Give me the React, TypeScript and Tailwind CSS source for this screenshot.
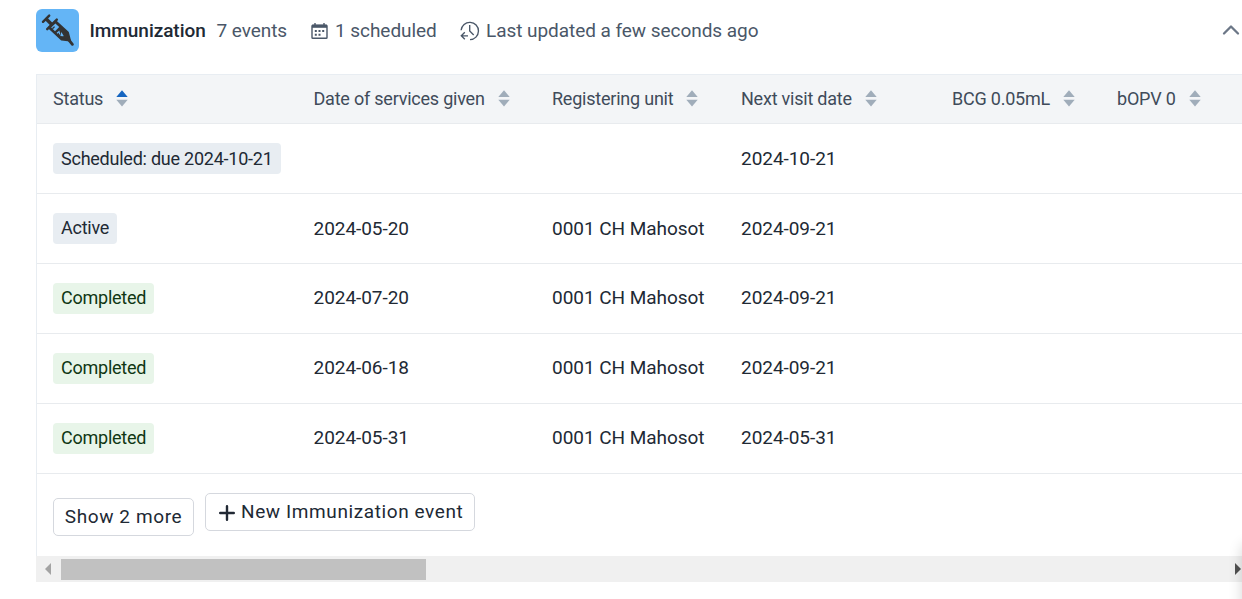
import React from 'react';

const columns = [
  { label: 'Status', sorted: true },
  { label: 'Date of services given' },
  { label: 'Registering unit' },
  { label: 'Next visit date' },
  { label: 'BCG 0.05mL' },
  { label: 'bOPV 0' },
];

const rows = [
  { status: 'Scheduled: due 2024-10-21', date: '', unit: '', next: '2024-10-21' },
  { status: 'Active', date: '2024-05-20', unit: '0001 CH Mahosot', next: '2024-09-21' },
  { status: 'Completed', date: '2024-07-20', unit: '0001 CH Mahosot', next: '2024-09-21' },
  { status: 'Completed', date: '2024-06-18', unit: '0001 CH Mahosot', next: '2024-09-21' },
  { status: 'Completed', date: '2024-05-31', unit: '0001 CH Mahosot', next: '2024-05-31' },
];

const grid = 'grid grid-cols-[260.5px_238.5px_189px_211px_165px_141px] items-center';

function SortIcon({ active }: { active?: boolean }) {
  return (
    <svg className="ml-[13px] mt-px shrink-0" width="12" height="17" viewBox="0 0 12 17">
      <path d="M6 .3 11.7 7H.3z" fill={active ? '#1565c0' : '#a0adba'} />
      <path d="M.3 9.7h11.4L6 16.4z" fill="#a0adba" />
    </svg>
  );
}

function Syringe() {
  return (
    <svg width="43" height="43" viewBox="0 0 43 43" fill="none" stroke="#333">
      <path d="m7 12.8 6.2-6.2" strokeWidth="2.4" strokeLinecap="round" />
      <path d="m10 9.7 5.5 5.5" strokeWidth="3.4" />
      <path d="m11.2 20.2 9.6-9.6" strokeWidth="2.4" strokeLinecap="round" />
      <path d="M13 18.8 19.6 12.2 31.9 23.6 34 31.6 25.6 30.4Z" fill="#333" strokeWidth="2" strokeLinejoin="round" />
      <path d="m15.2 18.6 4.2-4.2 3.8 3.6-4.2 4.2z" fill="#64b5f6" stroke="none" />
      <path d="m16.4 19.8 2.2-2.2" strokeWidth="1.3" />
      <path d="m21 24.2 2-1.7.7 2.8M24.9 27.1l.7-2.5 1.6 2.6" stroke="#64b5f6" strokeWidth="1.2" />
      <path d="m32.5 30.5 3.9 4.8" strokeWidth="2.8" strokeLinecap="round" />
    </svg>
  );
}

export default function App() {
  return (
    <div className="relative flex h-[599px] w-full flex-col overflow-hidden bg-white font-['Roboto',sans-serif] text-[#212934]">
      <header className="flex h-[74px] shrink-0 items-start pl-9 pt-[9px] text-[19px] tracking-[-0.05px] text-[#4a5768]">
        <div className="size-[43px] rounded-[6px] bg-[#64b5f6]"><Syringe /></div>
        <div className="flex h-[43px] flex-1 items-center whitespace-nowrap">
          <span className="ml-[10.5px] mt-[2px] w-[127px] font-medium text-[#212934]">Immunization</span>
          <span className="mt-[2px] w-[94.5px]">7 events</span>
          <svg className="mt-px" width="18" height="18" viewBox="0 0 18 18" fill="none" stroke="#4a5768">
            <rect x="1" y="3.2" width="15" height="13" rx=".8" strokeWidth="1.4" />
            <path d="M4 1v3M13 1v3" strokeWidth="1.4" />
            <path d="M1 4.3h15" strokeWidth="3" />
            <path d="M3.8 9h2M7.5 9h2M11.2 9h2M3.8 12.8h2M7.5 12.8h2" strokeWidth="1.9" />
          </svg>
          <span className="ml-[6px] mt-[2px] w-[125px]">1 scheduled</span>
          <svg width="20" height="20" viewBox="0 0 20 20" fill="none" stroke="#4a5768" strokeWidth="1.35">
            <path d="M1.1 9.2A8.7 8.7 0 1 1 10 18.7M9.7 4v6l4 4M8 14.8H1.6m3.2-3.5-3.5 3.5 3.5 3.5" />
          </svg>
          <span className="ml-[6px] mt-[2px]">Last updated a few seconds ago</span>
          <svg className="ml-auto mr-[2px] mt-[-2px]" width="18" height="12" viewBox="0 0 18 12" fill="none" stroke="#6c7787" strokeWidth="2.3" strokeLinecap="round" strokeLinejoin="round">
            <path d="m2 9.5 7-7 7 7" />
          </svg>
        </div>
      </header>
      <main className="ml-9 flex h-[508px] shrink-0 flex-col overflow-hidden">
        <div className="h-[482px] border-l border-t border-[#e8edf2]">
          <div className={`${grid} h-[49px] border-b border-[#e8ebee] bg-[#f3f5f7] pb-[2px] text-[18px] tracking-[-0.22px] text-[#404b5a]`}>
            {columns.map((c) => (
              <div key={c.label} className="flex items-center whitespace-nowrap pl-4">
                <span>{c.label}</span>
                <SortIcon active={c.sorted} />
              </div>
            ))}
          </div>
          {rows.map((r, i) => (
            <div key={i} className={`${grid} h-[70px] border-b border-[#e8ebee] text-[19px] tracking-[-0.05px]`}>
              <div className="pl-4">
                <span className={`flex h-[31px] w-fit items-center whitespace-nowrap rounded-[4px] px-2 text-[18px] tracking-[-0.24px] ${i > 0 ? 'pb-[2px]' : ''} ${r.status === 'Completed' ? 'bg-[#e8f5e9] text-[#103713]' : 'bg-[#e8edf2]'}`}>
                  {r.status}
                </span>
              </div>
              <div className={i < 2 ? 'pl-4 pt-[2px]' : 'pl-4'}>{r.date}</div>
              <div className={i < 2 ? 'whitespace-nowrap pl-4 pt-[2px]' : 'whitespace-nowrap pl-4'}>{r.unit}</div>
              <div className={i < 2 ? 'pl-4 pt-[2px]' : 'pl-4'}>{r.next}</div>
            </div>
          ))}
          <div className="flex items-start gap-[11px] pl-4 pt-[19px] text-[19px] tracking-[0.6px]">
            <button className="mt-[5px] h-[38px] w-[141px] whitespace-nowrap rounded-[5px] border border-[#d5d8de]">Show 2 more</button>
            <button className="flex h-[38px] w-[270px] items-center whitespace-nowrap rounded-[5px] border border-[#d5d8de] pl-[13px]">
              <svg className="mr-[6px] mt-px" width="16" height="16" viewBox="0 0 16 16" stroke="#212934" strokeWidth="2.4" strokeLinecap="round"><path d="M8 1.2v13.6M1.2 8h13.6" /></svg>
              <span>New Immunization event</span>
            </button>
          </div>
        </div>
        <div className="flex h-[26px] items-center bg-[#f0f0f0] pl-[9px]">
          <svg width="6" height="12" viewBox="0 0 6 12"><path d="M6 0v12L0 6z" fill="#a3a3a3" /></svg>
          <div className="ml-[10px] h-[21px] w-[365px] bg-[#c1c1c1]" />
          <svg className="ml-auto mr-[1px]" width="6" height="12" viewBox="0 0 6 12"><path d="M0 0v12l6-6z" fill="#505050" /></svg>
        </div>
      </main>
      <div className="pointer-events-none absolute -right-[20px] top-[545px] h-[80px] w-[20px] shadow-[0_0_14px_rgba(0,0,0,0.16)]" />
    </div>
  );
}
